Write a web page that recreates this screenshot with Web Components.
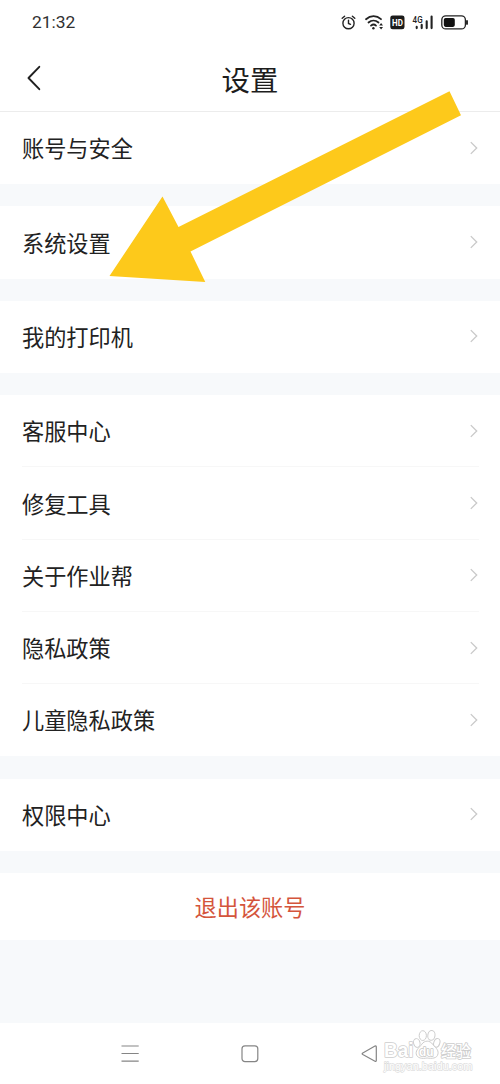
<!DOCTYPE html>
<html lang="zh-CN">
<head>
<meta charset="utf-8">
<title>设置</title>
<style>
html, body { margin: 0; padding: 0; background: #fff; }
body { font-family: "Noto Sans CJK SC", sans-serif; color: #222; }
</style>
</head>
<body>
<settings-screen></settings-screen>
<script>
const define = (name, html) => {
  const template = document.createElement('template');
  template.innerHTML = html;
  customElements.define(name, class extends HTMLElement {
    constructor() {
      super();
      this.attachShadow({ mode: 'open' }).append(template.content.cloneNode(true));
    }
  });
};

define('status-bar', `
<style>
:host { display: flex; height: 45px; padding: 0 31px 2px 32px; align-items: center; justify-content: space-between; box-sizing: border-box; font-family: Roboto, sans-serif; color: #303030; }
time { font-size: 17.4px; line-height: 20px; }
svg { display: block; overflow: visible; }
</style>
<time>21:32</time>
<svg width="129" height="20" viewBox="340 12 129 20" fill="none" stroke="#222" stroke-width="1.4" stroke-linecap="round">
  <circle cx="348.5" cy="23.2" r="5.6"/>
  <path d="M348.5 20.3v3.2l2 .8M342.2 18.3l2.4-2M354.8 18.3l-2.4-2"/>
  <path d="M366 19.2c4.6-4 10.6-4 15 0M368.5 22.5c3-2.6 7-2.6 10 0M371 25.6c1.6-1.4 3.6-1.4 5 0" stroke-width="1.8"/>
  <circle cx="373.4" cy="28.3" r="1.2" fill="#222" stroke="none"/>
  <path d="M379.2 25.4l1.9-2.4 1.9 2.4zM379.2 27l1.9 2.4 1.9-2.4z" fill="#222" stroke="none"/>
  <rect x="390.3" y="15.4" width="14.2" height="13.9" rx="2.4" fill="#1b1b1b" stroke="none"/>
  <text x="392.1" y="26" fill="#fff" stroke="none" font-size="9.8" font-weight="700" textLength="10.8" lengthAdjust="spacingAndGlyphs">HD</text>
  <text x="412.6" y="22.5" fill="#222" stroke="none" font-size="9" font-weight="500" textLength="10" lengthAdjust="spacingAndGlyphs">4G</text>
  <path d="M416.7 26.9v1.2M421.7 24.9v3.2M426.7 21.2v6.9M431.6 16.6v11.5" stroke-width="2.1"/>
  <rect x="441.8" y="15.9" width="23.6" height="13" rx="4" stroke-width="1.3"/>
  <rect x="443.8" y="17.9" width="11" height="9" rx="1.8" fill="#111" stroke="none"/>
  <path d="M467 20.9v3" stroke-width="1.9"/>
</svg>`);

define('title-bar', `
<style>
:host { display: grid; grid-template-columns: 80px 1fr 80px; height: 67px; align-items: center; box-sizing: border-box; border-bottom: 1px solid #ececec; }
svg { margin-left: 26px; display: block; }
h1 { margin: 1px 0 0; text-align: center; font-size: 28.4px; line-height: 36px; font-weight: 400; color: #1d1d1d; }
</style>
<svg width="18" height="28" viewBox="0 0 18 28" fill="none" stroke="#202020" stroke-width="1.9" stroke-linecap="round" stroke-linejoin="round"><path d="M13.3 2.8L2.5 14l10.8 11.2"/></svg>
<h1><slot></slot></h1>`);

define('settings-row', `
<style>
:host { display: flex; flex: 1 1 0; min-height: 0; margin: 0 21px 0 22px; align-items: center; justify-content: space-between; box-sizing: border-box; border-bottom: 1px solid transparent; font-size: 22.2px; line-height: 32px; color: #222; }
:host([divided]) { border-color: #f7f7f7; }
svg { display: block; margin-right: 1px; }
span { padding-bottom: 1px; }
</style>
<span><slot></slot></span>
<svg width="8" height="14" viewBox="0 0 8 14" fill="none" stroke="#c9c9c9" stroke-width="1.3"><path d="M.8 1.1L6.7 7 .8 12.9"/></svg>`);

define('settings-group', `
<style>
:host { display: flex; flex-direction: column; background: #fff; height: 72.3px; }
:host([size="5"]) { height: 361.3px; }
</style>
<slot></slot>`);

define('logout-button', `
<style>
:host { display: flex; height: 67px; align-items: center; justify-content: center; background: #fff; font-size: 22.2px; line-height: 32px; color: #d4553c; }
</style>
<span><slot></slot></span>`);

define('site-watermark', `
<style>
:host { position: absolute; left: 380px; top: 4px; display: block; }
svg { display: block; }
text { paint-order: stroke; stroke-linejoin: round; }
</style>
<svg width="100" height="52" viewBox="380 1027 100 52" fill="#fff" stroke="#cdcdcd" stroke-width="1">
  <text x="384" y="1057.3" stroke-width="1.6" font-family="Liberation Sans, sans-serif" font-weight="700" font-size="20.5" textLength="29.5" lengthAdjust="spacingAndGlyphs">Bai</text>
  <ellipse cx="416.8" cy="1043" rx="3.2" ry="4.4" transform="rotate(-15 416.8 1043)"/>
  <ellipse cx="422.8" cy="1035.6" rx="3.6" ry="4.9"/>
  <ellipse cx="431.4" cy="1035.4" rx="3.6" ry="4.9" transform="rotate(8 431.4 1035.4)"/>
  <ellipse cx="436.8" cy="1042.8" rx="3" ry="4.4" transform="rotate(18 436.8 1042.8)"/>
  <path d="M421.8 1044.2c2.8-4 8-4.1 10.8 0 2 3 6.2 5.1 5.4 9.6-.8 4.9-6.3 4.9-10.9 4.2-4.8.9-10.1.5-10.9-4.2-.5-4.1 3.5-6.5 5.6-9.6z"/>
  <text x="419" y="1056" font-family="Liberation Sans, sans-serif" font-weight="700" font-size="13" stroke="#c6c6c6" stroke-width="1.6" textLength="14.5" lengthAdjust="spacingAndGlyphs">du</text>
  <text x="441" y="1056.5" font-family="Noto Sans CJK SC, sans-serif" font-weight="500" font-size="15.5" stroke-width="1.7" textLength="30" lengthAdjust="spacingAndGlyphs">经验</text>
  <text x="384" y="1070" font-family="Liberation Sans, sans-serif" font-size="10.8" stroke="#dcdcdc" stroke-width="1.3" textLength="88.5" lengthAdjust="spacingAndGlyphs">jingyan.baidu.com</text>
</svg>`);

define('nav-bar', `
<style>
:host { display: flex; position: relative; height: 61px; align-items: center; justify-content: space-between; padding: 0 121px; box-sizing: border-box; background: #fff; }
svg { display: block; fill: none; stroke: #858585; stroke-width: 1.2; stroke-linejoin: round; }
</style>
<svg width="18" height="20" viewBox="0 0 18 20"><path d="M.5 2h17.2M.5 9.5h17.2M.5 17.2h17.2"/></svg>
<svg width="18" height="20" viewBox="0 0 18 20"><rect x="1" y="1.8" width="15.8" height="15.8" rx="3"/></svg>
<svg width="18" height="20" viewBox="0 0 18 20"><path d="M1.8 8.9L14 2.1q1.3-.5 1.3.8v13.6q0 1.3-1.3.8L1.8 10.5q-1.3-.8 0-1.6z"/></svg>
<site-watermark></site-watermark>`);

define('pointer-arrow', `
<style>
:host { position: absolute; left: 108px; top: 88px; display: block; }
svg { display: block; }
</style>
<svg width="356" height="198" viewBox="108 88 356 198"><path fill="#fdc91b" d="M109.5 276L162.5 196.5 178.5 227 449.5 91.2 461 115.2 190.5 251.5 205.3 282z"/></svg>`);

define('settings-screen', `
<style>
:host { display: flex; flex-direction: column; position: relative; width: 500px; height: 1084px; overflow: hidden; background: #fff; }
main { display: flex; flex: 1; flex-direction: column; gap: 22.1px; background: #f7f9fb; }
</style>
<status-bar></status-bar>
<title-bar>设置</title-bar>
<main>
  <settings-group><settings-row>账号与安全</settings-row></settings-group>
  <settings-group><settings-row>系统设置</settings-row></settings-group>
  <settings-group><settings-row>我的打印机</settings-row></settings-group>
  <settings-group size="5">
    <settings-row divided>客服中心</settings-row>
    <settings-row divided>修复工具</settings-row>
    <settings-row divided>关于作业帮</settings-row>
    <settings-row divided>隐私政策</settings-row>
    <settings-row>儿童隐私政策</settings-row>
  </settings-group>
  <settings-group><settings-row>权限中心</settings-row></settings-group>
  <logout-button>退出该账号</logout-button>
</main>
<nav-bar></nav-bar>
<pointer-arrow></pointer-arrow>`);
</script>
</body>
</html>
